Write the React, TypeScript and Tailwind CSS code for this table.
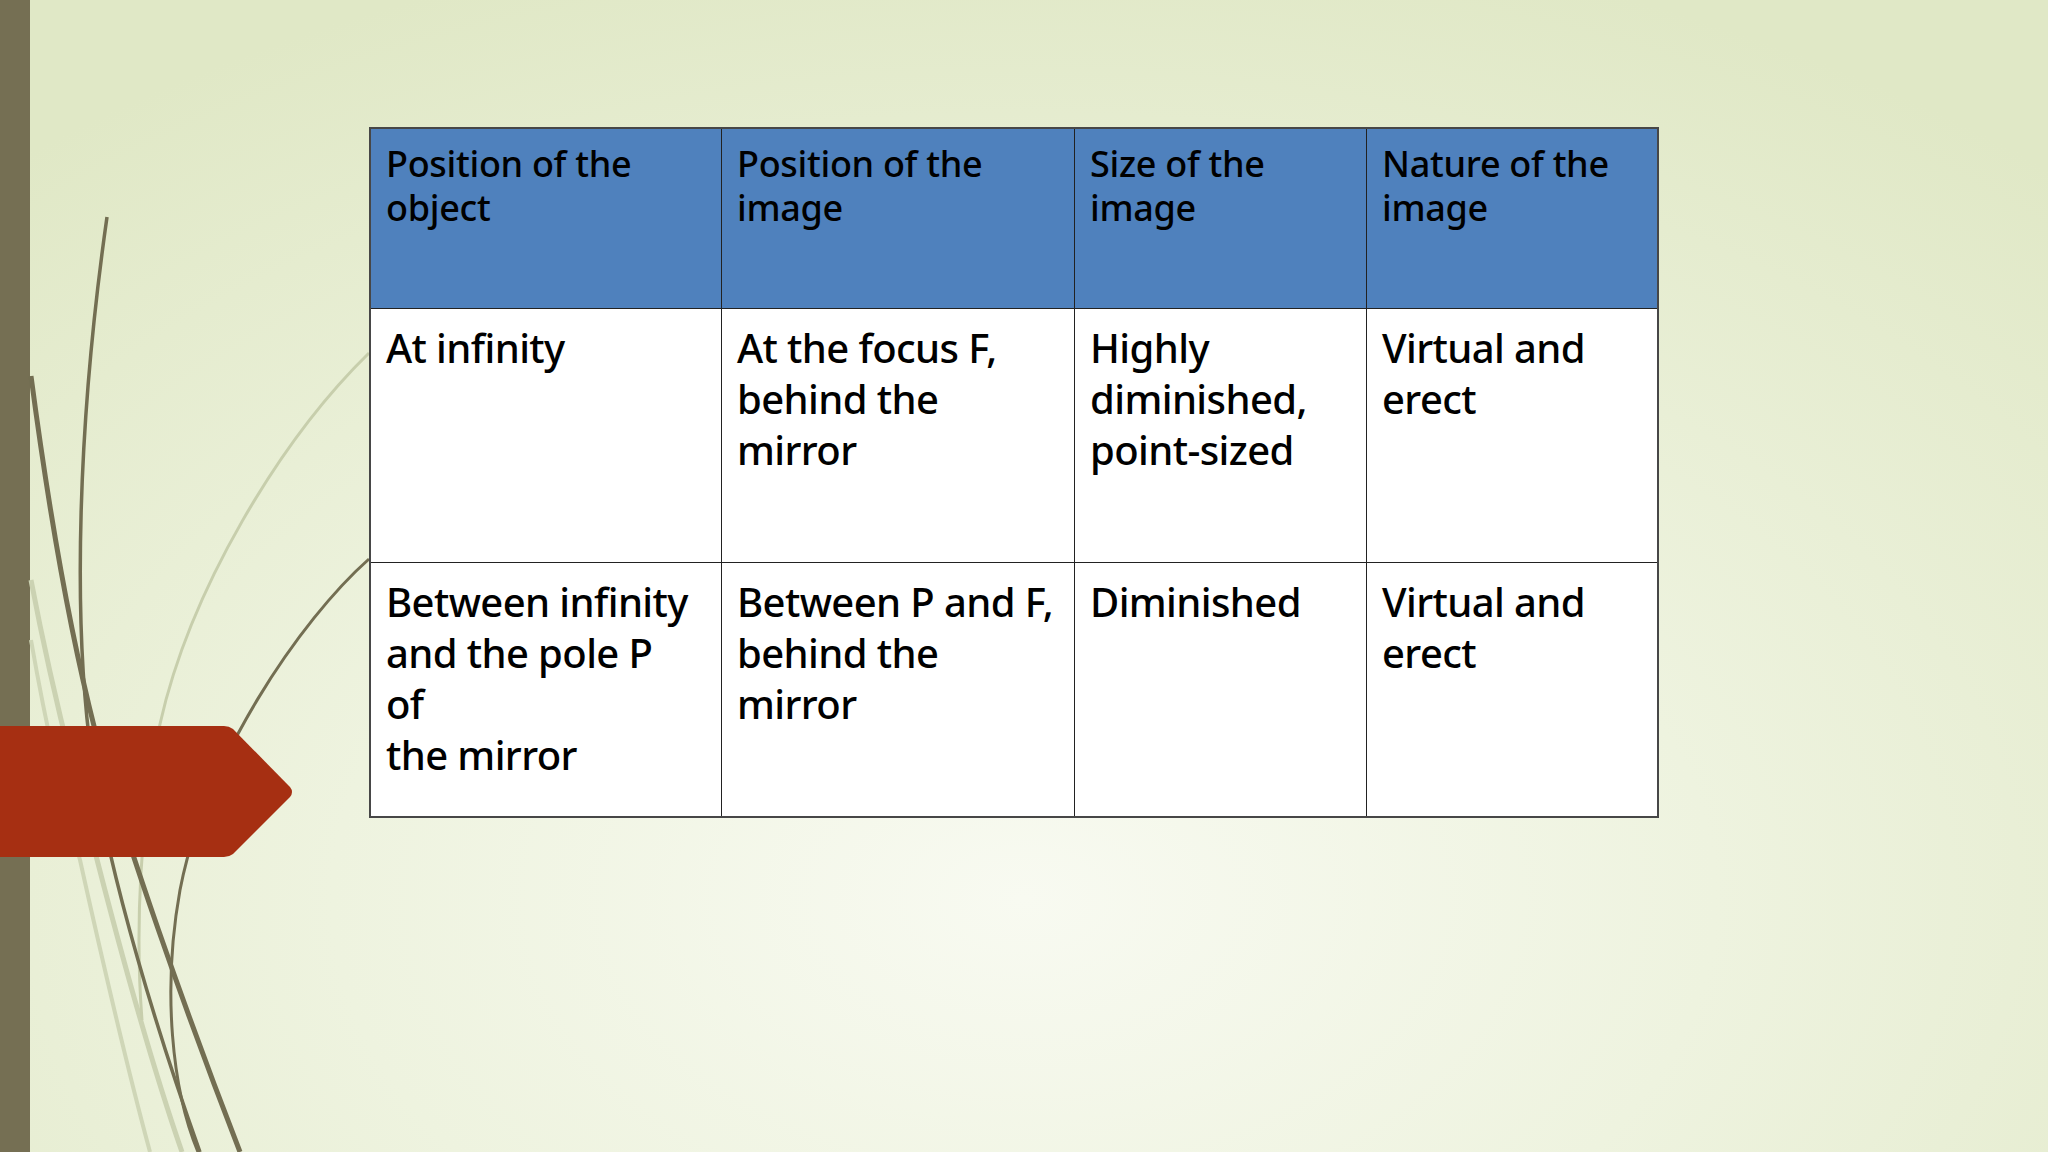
const HEAD = [
  ["Position of the", "object"],
  ["Position of the", "image"],
  ["Size of the", "image"],
  ["Nature of the", "image"],
];

const ROWS = [
  [
    ["At infinity"],
    ["At the focus F,", "behind the", "mirror"],
    ["Highly", "diminished,", "point-sized"],
    ["Virtual and", "erect"],
  ],
  [
    ["Between infinity", "and the pole P", "of", "the mirror"],
    ["Between P and F,", "behind the", "mirror"],
    ["Diminished"],
    ["Virtual and", "erect"],
  ],
];

const Lines = ({ lines }: { lines: string[] }) => (
  <>
    {lines.map((l, i) => (
      <div key={i} className="whitespace-nowrap">
        {l}
      </div>
    ))}
  </>
);

// swooshes + red arrow on the left edge
const Decor = () => (
  <svg className="absolute inset-0 pointer-events-none" width="2048" height="1152" viewBox="0 0 2048 1152">
    {/* light faint strands */}
    <path d="M31,580 C50,680 70,760 92,840 C120,950 150,1060 182,1152" fill="none" stroke="#cbd2b2" strokeWidth="5" />
    <path d="M31,640 C45,720 60,790 80,860 C100,950 125,1060 150,1152" fill="none" stroke="#cfd6b7" strokeWidth="4" />
    <path d="M369,353 C280,440 190,590 160,724 C140,820 135,930 142,1020" fill="none" stroke="#c7ceac" strokeWidth="3" />
    {/* dark strands */}
    <path d="M107,217 C78,420 72,620 92,760 C110,880 160,1040 200,1152" fill="none" stroke="#736e52" strokeWidth="3.5" />
    <path d="M31,376 C50,520 72,640 95,730 C125,840 185,1010 240,1152" fill="none" stroke="#736e52" strokeWidth="5" />
    <path d="M369,559 C300,620 205,760 180,890 C162,990 172,1090 198,1152" fill="none" stroke="#736e52" strokeWidth="3" />
    {/* arrow */}
    <path d="M0,726 L224,726 Q229,726 233,729 L290,787 Q294,792 290,797 L233,854 Q229,857 224,857 L0,857 Z" fill="#a62f12" />
  </svg>
);

export default function App() {
  return (
    <div
      className="relative w-[2048px] h-[1152px] overflow-hidden flex bg-[radial-gradient(ellipse_75%_85%_at_50%_78%,#f8faf1_0%,#eef3df_45%,#e0e8c6_100%)]"
      style={{ fontFamily: '"Noto Sans", "Open Sans", sans-serif' }}
    >
      <div className="w-[30px] h-full bg-[#756f53] shrink-0" />
      <Decor />
      <div className="relative pl-[339px] pt-[127px]">
        <div className="grid grid-cols-[351px_353px_292px_290px] grid-rows-[180px_254px_253px] border-2 border-[#474747] text-black font-medium">
          {HEAD.map((h, i) => (
            <div
              key={i}
              className={`bg-[#4f81bd] border-b border-[#222] pl-[15px] pr-[10px] pt-[13px] text-[36px] leading-[44px] tracking-[-0.3px] ${i < 3 ? "border-r" : ""}`}
            >
              <Lines lines={h} />
            </div>
          ))}
          {ROWS.map((row, r) =>
            row.map((c, i) => (
              <div
                key={`${r}-${i}`}
                className={`bg-white border-[#222] pl-[15px] pr-[10px] pt-[13px] text-[40px] leading-[51px] tracking-[-0.6px] ${i < 3 ? "border-r" : ""} ${r === 0 ? "border-b" : ""}`}
              >
                <Lines lines={c} />
              </div>
            ))
          )}
        </div>
      </div>
    </div>
  );
}
